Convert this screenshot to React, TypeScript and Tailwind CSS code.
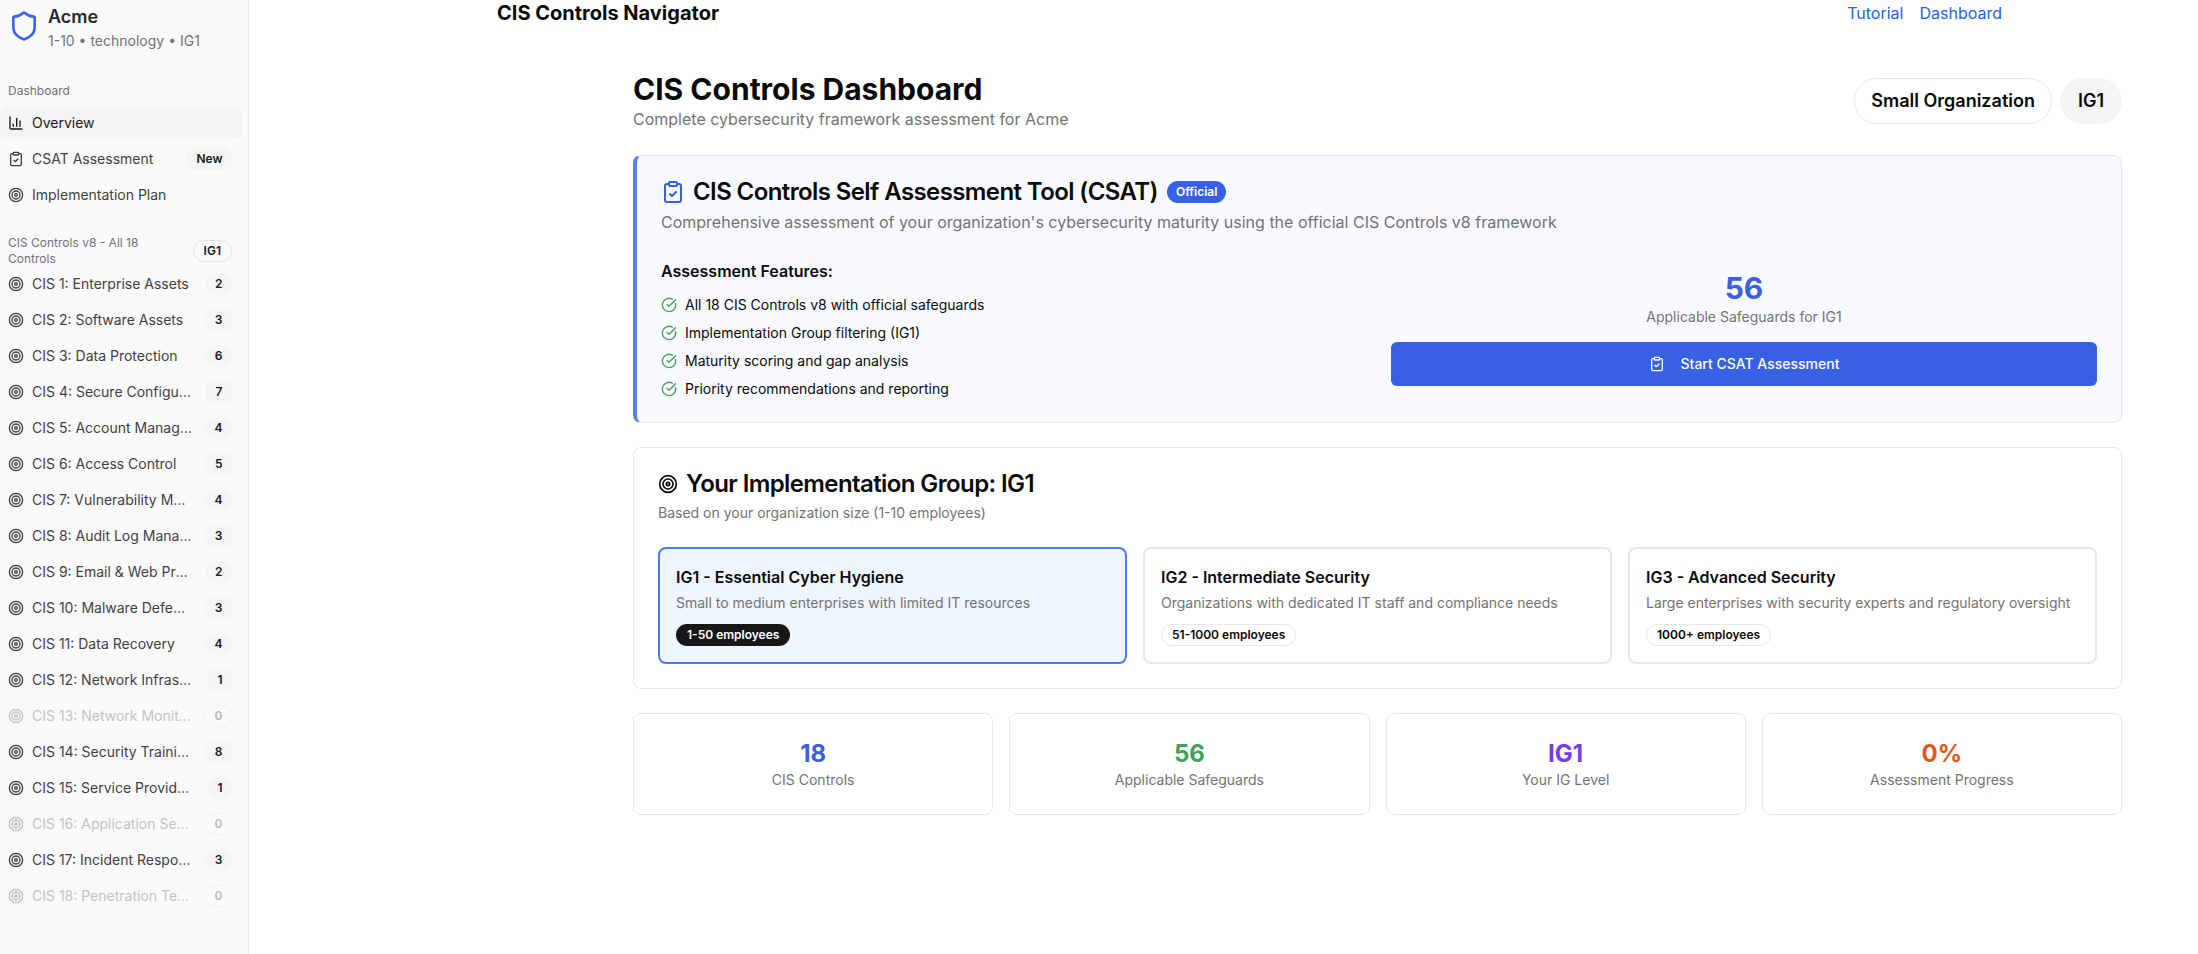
import { ChartColumn, CircleCheckBig, ClipboardCheck, Shield, Target } from "lucide-react";
import type { ReactNode } from "react";

const CONTROLS: [string, number][] = [
  ["CIS 1: Enterprise Assets", 2],
  ["CIS 2: Software Assets", 3],
  ["CIS 3: Data Protection", 6],
  ["CIS 4: Secure Configuration", 7],
  ["CIS 5: Account Management", 4],
  ["CIS 6: Access Control", 5],
  ["CIS 7: Vulnerability Management", 4],
  ["CIS 8: Audit Log Management", 3],
  ["CIS 9: Email & Web Protections", 2],
  ["CIS 10: Malware Defenses", 3],
  ["CIS 11: Data Recovery", 4],
  ["CIS 12: Network Infrastructure", 1],
  ["CIS 13: Network Monitoring", 0],
  ["CIS 14: Security Training", 8],
  ["CIS 15: Service Providers", 1],
  ["CIS 16: Application Security", 0],
  ["CIS 17: Incident Response", 3],
  ["CIS 18: Penetration Testing", 0],
];

const FEATURES = [
  "All 18 CIS Controls v8 with official safeguards",
  "Implementation Group filtering (IG1)",
  "Maturity scoring and gap analysis",
  "Priority recommendations and reporting",
];

const GROUPS = [
  {
    title: "IG1 - Essential Cyber Hygiene",
    text: "Small to medium enterprises with limited IT resources",
    size: "1-50 employees",
    active: true,
  },
  {
    title: "IG2 - Intermediate Security",
    text: "Organizations with dedicated IT staff and compliance needs",
    size: "51-1000 employees",
    active: false,
  },
  {
    title: "IG3 - Advanced Security",
    text: "Large enterprises with security experts and regulatory oversight",
    size: "1000+ employees",
    active: false,
  },
];

const STATS = [
  { value: "18", label: "CIS Controls", color: "text-[#3860e4]" },
  { value: "56", label: "Applicable Safeguards", color: "text-[#42a05a]" },
  { value: "IG1", label: "Your IG Level", color: "text-[#7c3aed]" },
  { value: "0%", label: "Assessment Progress", color: "text-[#dc5a20]" },
];

function SideRow({
  icon,
  label,
  badge,
  active,
  muted,
  outlined,
}: {
  icon: ReactNode;
  label: string;
  badge?: string;
  active?: boolean;
  muted?: boolean;
  outlined?: boolean;
}) {
  return (
    <div
      className={`flex h-8 w-[241px] items-center gap-2 rounded-md pl-[8px] pr-2 text-sm ${
        active ? "bg-[#f4f4f5] text-[#18181b]" : "text-[#3f3f46]"
      } ${muted ? "opacity-30" : ""}`}
    >
      {icon}
      <span className="min-w-0 flex-1 truncate pr-[4px]">{label}</span>
      {badge && (
        <span
          className={`flex h-[22px] shrink-0 items-center rounded-full border px-[9.5px] text-xs font-semibold text-[#18181b] ${
            outlined ? "border-[#e5e5e5]" : "border-transparent bg-[#f5f5f5]"
          }`}
        >
          {badge}
        </span>
      )}
    </div>
  );
}

function Sidebar() {
  return (
    <aside className="h-[954px] w-[249px] shrink-0 overflow-hidden border-r border-[#e8e8e8] bg-[#fafafa]">
      <div className="flex h-[83px] items-start gap-2 pl-2 pt-[5px]">
        <Shield className="mt-[5px] h-8 w-8 shrink-0 text-[#3b66e8]" strokeWidth={2} />
        <div>
          <div className="text-lg font-semibold leading-[24px] text-[#27272a]">Acme</div>
          <div className="mt-[2px] text-sm leading-5 text-[#71717a]">1-10 • technology • IG1</div>
        </div>
      </div>

      <div className="pl-2 text-xs leading-4 text-[#71717a]">Dashboard</div>
      <div className="mt-2 flex flex-col gap-1">
        <SideRow active label="Overview" icon={<ChartColumn className="h-4 w-4 shrink-0" />} />
        <SideRow label="CSAT Assessment" badge="New" icon={<ClipboardCheck className="h-4 w-4 shrink-0" />} />
        <SideRow label="Implementation Plan" icon={<Target className="h-4 w-4 shrink-0" />} />
      </div>

      <div className="mt-6 flex items-center justify-between pl-2 pr-[16px]">
        <div className="w-[150px] text-xs leading-4 text-[#71717a]">CIS Controls v8 - All 18 Controls</div>
        <span className="flex h-[22px] items-center rounded-full border border-[#e5e5e5] px-[10px] text-xs font-semibold text-[#18181b]">
          IG1
        </span>
      </div>
      <div className="mt-[1px] flex flex-col gap-1">
        {CONTROLS.map(([name, count]) => (
          <SideRow
            key={name}
            label={name}
            badge={String(count)}
            muted={count === 0}
            outlined={count === 0}
            icon={<Target className="h-4 w-4 shrink-0" />}
          />
        ))}
      </div>
    </aside>
  );
}

function CsatCard() {
  return (
    <section className="rounded-lg border border-l-4 border-[#e8e8e8] border-l-[#5580ee] bg-[#f9faff] px-6 pb-[23px] pt-6">
      <div className="flex h-6 items-center gap-2">
        <ClipboardCheck className="h-6 w-6 text-[#3860e4]" />
        <h2 className="text-2xl font-semibold leading-6 tracking-tight text-[#0a0a0a]">
          CIS Controls Self Assessment Tool (CSAT)
        </h2>
        <span className="ml-[1px] flex h-[22px] items-center rounded-full bg-[#3860e4] px-[9px] text-xs font-semibold text-white">
          Official
        </span>
      </div>
      <p className="mt-[6px] text-base leading-6 text-[#737373]">
        Comprehensive assessment of your organization's cybersecurity maturity using the official CIS Controls v8
        framework
      </p>
      <div className="mt-6 grid grid-cols-2 gap-6">
        <div className="pt-[1px]">
          <h3 className="text-base font-semibold leading-6 text-[#0a0a0a]">Assessment Features:</h3>
          <ul className="mt-3 flex flex-col gap-2">
            {FEATURES.map((feature) => (
              <li key={feature} className="flex items-center gap-2 text-sm leading-5 text-[#0a0a0a]">
                <CircleCheckBig className="h-4 w-4 shrink-0 text-[#42a05a]" />
                {feature}
              </li>
            ))}
          </ul>
        </div>
        <div className="flex flex-col pt-3">
          <div className="text-center text-3xl font-bold leading-9 text-[#3860e4]">56</div>
          <div className="mt-[1px] text-center text-sm leading-5 text-[#737373]">Applicable Safeguards for IG1</div>
          <button
            type="button"
            className="mt-[15px] flex h-11 items-center justify-center gap-4 rounded-md bg-[#3860e4] text-sm font-medium text-white"
          >
            <ClipboardCheck className="h-4 w-4" />
            Start CSAT Assessment
          </button>
        </div>
      </div>
    </section>
  );
}

function GroupCard() {
  return (
    <section className="mt-6 rounded-lg border border-[#e8e8e8] bg-white p-6">
      <div className="flex h-6 items-center gap-2">
        <Target className="h-5 w-5 text-[#0a0a0a]" />
        <h2 className="text-2xl font-semibold leading-6 tracking-tight text-[#0a0a0a]">
          Your Implementation Group: IG1
        </h2>
      </div>
      <p className="mt-[7px] text-sm leading-5 text-[#737373]">Based on your organization size (1-10 employees)</p>
      <div className="mt-6 grid grid-cols-3 gap-4">
        {GROUPS.map((group) => (
          <div
            key={group.title}
            className={`h-[117px] rounded-lg border-2 p-4 ${
              group.active ? "border-[#4d7bec] bg-[#eff6ff]" : "border-[#e8e8e8] bg-white"
            }`}
          >
            <h3 className="text-base font-semibold leading-6 text-[#0a0a0a]">{group.title}</h3>
            <p className="mt-1 text-sm leading-5 text-[#737373]">{group.text}</p>
            <span
              className={`mt-[11px] flex h-[22px] w-fit items-center rounded-full border px-[10px] text-xs font-semibold ${
                group.active
                  ? "border-transparent bg-[#171717] text-white"
                  : "border-[#e8e8e8] bg-white text-[#0a0a0a]"
              }`}
            >
              {group.size}
            </span>
          </div>
        ))}
      </div>
    </section>
  );
}

export default function App() {
  return (
    <div className="flex h-[954px] w-[2198px] overflow-hidden bg-white font-['Inter',sans-serif]">
      <Sidebar />
      <main className="min-w-0 flex-1">
        <header className="flex h-[26px] items-center justify-between pl-[248px] pr-[196px]">
          <div className="text-xl font-bold text-[#0a0a0a]">CIS Controls Navigator</div>
          <nav className="flex gap-4 text-base text-[#2563eb]">
            <span>Tutorial</span>
            <span>Dashboard</span>
          </nav>
        </header>

        <div className="pl-[384px] pr-[76px] pt-[45px]">
          <div className="flex items-start justify-between">
            <div>
              <h1 className="text-3xl font-bold leading-9 text-[#0a0a0a]">CIS Controls Dashboard</h1>
              <p className="text-base leading-6 text-[#737373]">Complete cybersecurity framework assessment for Acme</p>
            </div>
            <div className="mt-[7px] flex gap-2">
              <span className="flex h-[46px] items-center rounded-full border border-[#e8e8e8] px-4 text-lg font-semibold text-[#0a0a0a]">
                Small Organization
              </span>
              <span className="flex h-[46px] items-center rounded-full border border-transparent bg-[#f5f5f5] px-[17px] text-lg font-semibold text-[#0a0a0a]">
                IG1
              </span>
            </div>
          </div>

          <div className="mt-6">
            <CsatCard />
          </div>
          <GroupCard />

          <div className="mt-6 grid grid-cols-4 gap-4">
            {STATS.map((stat) => (
              <div key={stat.label} className="rounded-lg border border-[#e8e8e8] bg-white p-6 text-center">
                <div className={`text-2xl font-bold leading-8 ${stat.color}`}>{stat.value}</div>
                <div className="text-sm leading-5 text-[#737373]">{stat.label}</div>
              </div>
            ))}
          </div>
        </div>
      </main>
    </div>
  );
}
